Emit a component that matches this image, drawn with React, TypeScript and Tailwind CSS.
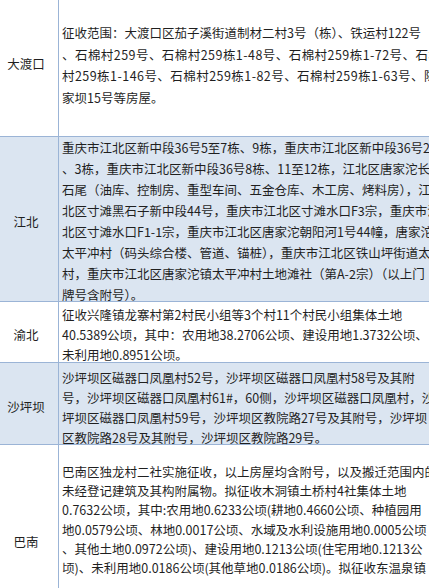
import React from "react";

// Land requisition table, clipped on the right like the source screenshot.
// Lines are written out one by one so the breaks match the original document.

type Line = string | { t: string; wide: true };

type Row = {
  name: string;
  lines: Line[];
  blue?: boolean;
  h: string; // row height incl. bottom border
  lh: string; // text line height
  pt: string; // text padding top
  labelPt: string;
};

const ROWS: Row[] = [
  {
    name: "大渡口",
    h: "h-[137px]",
    lh: "leading-[21.5px]",
    pt: "pt-[22px]",
    labelPt: "pb-[8px]",
    lines: [
      "征收范围：大渡口区茄子溪街道制材二村3号（栋）、铁运村122号",
      { t: "、石棉村259号、石棉村259栋1-48号、石棉村259栋1-72号、石棉", wide: true },
      { t: "村259栋1-146号、石棉村259栋1-82号、石棉村259栋1-63号、陈", wide: true },
      "家坝15号等房屋。",
    ],
  },
  {
    name: "江北",
    blue: true,
    h: "h-[165px]",
    lh: "leading-[21px]",
    pt: "pt-0",
    labelPt: "pt-[6px]",
    lines: [
      "重庆市江北区新中段36号5至7栋、9栋，重庆市江北区新中段36号2",
      "、3栋，重庆市江北区新中段36号8栋、11至12栋，江北区唐家沱长",
      "石尾（油库、控制房、重型车间、五金仓库、木工房、烤料房），江",
      "北区寸滩黑石子新中段44号，重庆市江北区寸滩水口F3宗，重庆市江",
      "北区寸滩水口F1-1宗，重庆市江北区唐家沱朝阳河1号44幢，唐家沱",
      "太平冲村（码头综合楼、管道、锚桩），重庆市江北区铁山坪街道太平冲",
      "村，重庆市江北区唐家沱镇太平冲村土地滩社（第A-2宗）（以上门",
      "牌号含附号）。",
    ],
  },
  {
    name: "渝北",
    h: "h-[61px]",
    lh: "leading-[20px]",
    pt: "pt-[3px]",
    labelPt: "pt-[6px]",
    lines: [
      "征收兴隆镇龙寨村第2村民小组等3个村11个村民小组集体土地",
      "40.5389公顷，其中：农用地38.2706公顷、建设用地1.3732公顷、",
      "未利用地0.8951公顷。",
    ],
  },
  {
    name: "沙坪坝",
    blue: true,
    h: "h-[82px]",
    lh: "leading-[20px]",
    pt: "pt-[5px]",
    labelPt: "pt-[8px]",
    lines: [
      "沙坪坝区磁器口凤凰村52号，沙坪坝区磁器口凤凰村58号及其附",
      "号，沙坪坝区磁器口凤凰村61#，60侧，沙坪坝区磁器口凤凰村，沙",
      "坪坝区磁器口凤凰村59号，沙坪坝区教院路27号及其附号，沙坪坝",
      "区教院路28号及其附号，沙坪坝区教院路29号。",
    ],
  },
  {
    name: "巴南",
    h: "h-[200px]",
    lh: "leading-[19.2px]",
    pt: "pt-[17px]",
    labelPt: "pb-[4px]",
    lines: [
      "巴南区独龙村二社实施征收，以上房屋均含附号，以及搬迁范围内的",
      "未经登记建筑及其构附属物。拟征收木洞镇土桥村4社集体土地",
      "0.7632公顷，其中:农用地0.6233公顷(耕地0.4660公顷、种植园用",
      "地0.0579公顷、林地0.0017公顷、水域及水利设施用地0.0005公顷",
      "、其他土地0.0972公顷)、建设用地0.1213公顷(住宅用地0.1213公",
      "顷)、未利用地0.0186公顷(其他草地0.0186公顷)。拟征收东温泉镇",
    ],
  },
];

export default function App() {
  return (
    <div
      className="h-[588px] w-[429px] overflow-hidden bg-white text-[12.5px] text-[#1f1f1f]"
      style={{ fontFamily: '"Microsoft YaHei", "Noto Sans CJK SC", "Noto Sans", sans-serif' }}
    >
      <div className="w-[560px]">
        {ROWS.map((r) => (
          <div
            key={r.name}
            className={`flex border-b border-[#9bb4d6] ${r.h} ${r.blue ? "bg-[#dbe5f1]" : "bg-white"}`}
          >
            <div className={`flex w-[59px] shrink-0 items-center justify-center border-r border-[#9bb4d6] pr-[6px] ${r.labelPt}`}>
              {r.name}
            </div>
            <div className={`flex-1 pl-[3px] ${r.pt} ${r.lh}`}>
              {r.lines.map((l, i) =>
                typeof l === "string" ? (
                  <div key={i} className="whitespace-nowrap">{l}</div>
                ) : (
                  <div key={i} className="whitespace-nowrap tracking-[0.45px]">{l.t}</div>
                ),
              )}
            </div>
          </div>
        ))}
      </div>
    </div>
  );
}
